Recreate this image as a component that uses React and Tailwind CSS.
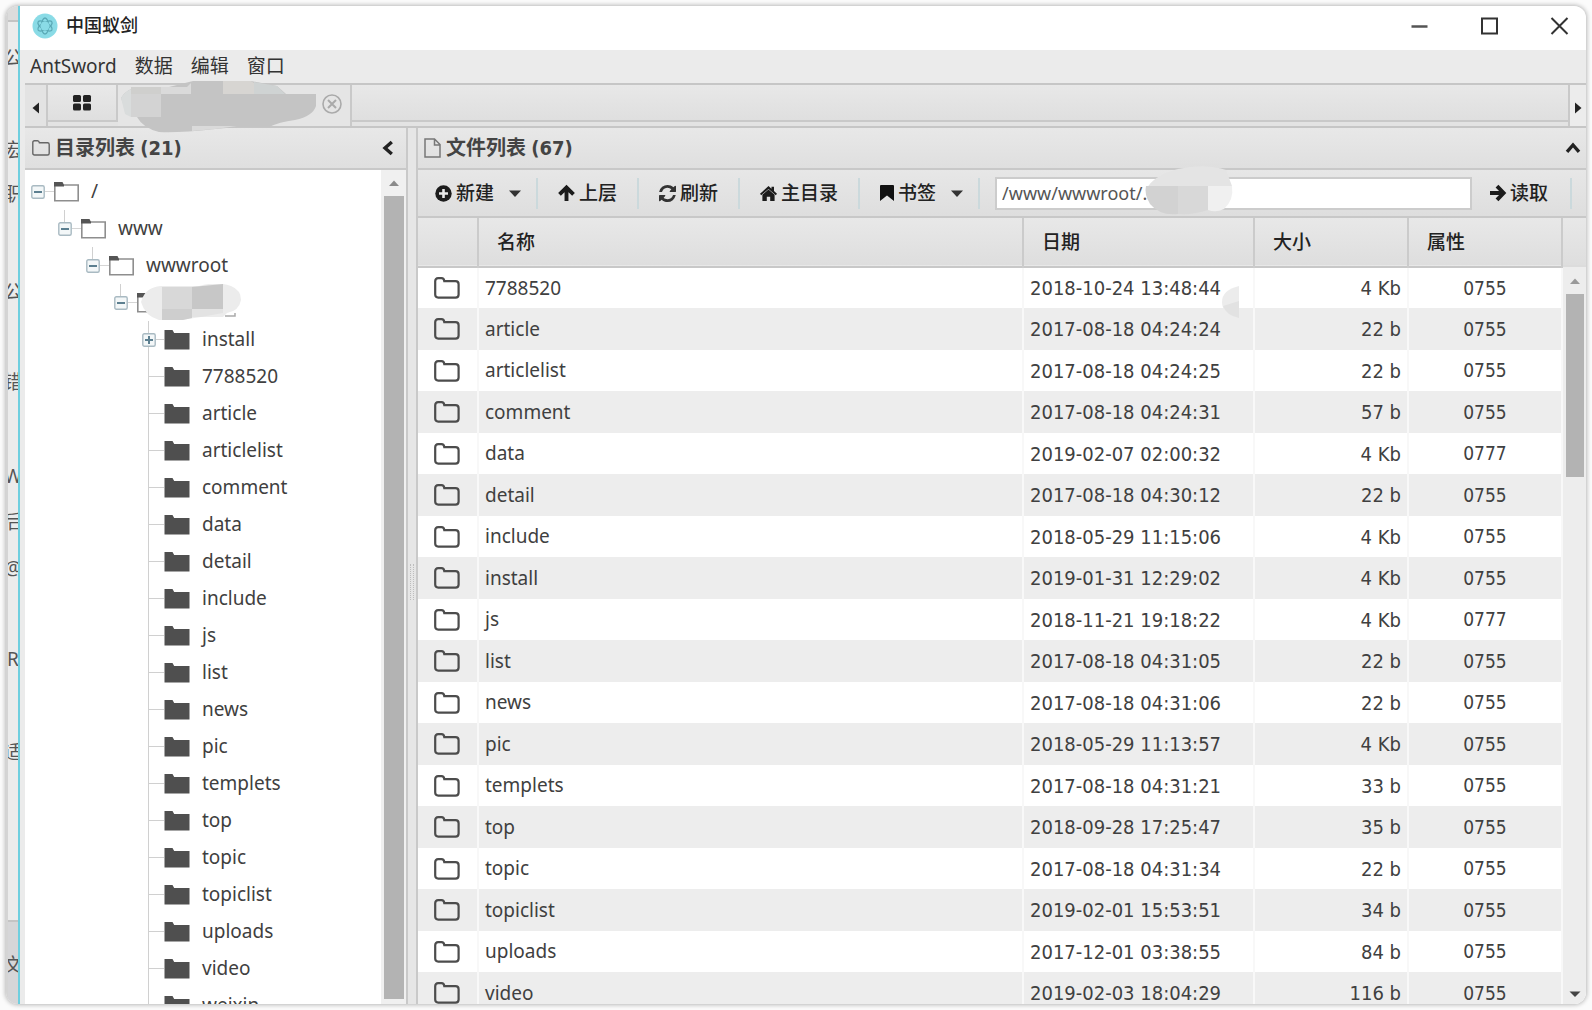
import React from "react";

const treeItems = ["install", "7788520", "article", "articlelist", "comment", "data", "detail", "include", "js", "list", "news", "pic", "templets", "top", "topic", "topiclist", "uploads", "video", "weixin"];

const files = [
  ["7788520", "2018-10-24 13:48:44", "4 Kb", "0755"],
  ["article", "2017-08-18 04:24:24", "22 b", "0755"],
  ["articlelist", "2017-08-18 04:24:25", "22 b", "0755"],
  ["comment", "2017-08-18 04:24:31", "57 b", "0755"],
  ["data", "2019-02-07 02:00:32", "4 Kb", "0777"],
  ["detail", "2017-08-18 04:30:12", "22 b", "0755"],
  ["include", "2018-05-29 11:15:06", "4 Kb", "0755"],
  ["install", "2019-01-31 12:29:02", "4 Kb", "0755"],
  ["js", "2018-11-21 19:18:22", "4 Kb", "0777"],
  ["list", "2017-08-18 04:31:05", "22 b", "0755"],
  ["news", "2017-08-18 04:31:06", "22 b", "0755"],
  ["pic", "2018-05-29 11:13:57", "4 Kb", "0755"],
  ["templets", "2017-08-18 04:31:21", "33 b", "0755"],
  ["top", "2018-09-28 17:25:47", "35 b", "0755"],
  ["topic", "2017-08-18 04:31:34", "22 b", "0755"],
  ["topiclist", "2019-02-01 15:53:51", "34 b", "0755"],
  ["uploads", "2017-12-01 03:38:55", "84 b", "0755"],
  ["video", "2019-02-03 18:04:29", "116 b", "0755"],
];

const icon = "shrink-0 overflow-visible";

const FolderOutline = () => (
  <svg className={icon} width="26" height="22" viewBox="0 0 26 22" fill="none" stroke="#4c4c4c" strokeWidth="2.200">
    <path d="M1.2 4.2Q1.2 1.2 4.2 1.2H7.5Q10 1.2 10.3 4.2H21.5Q24.6 4.2 24.6 7.2V17.5Q24.6 20.6 21.5 20.6H4.2Q1.2 20.6 1.2 17.5Z" />
  </svg>
);
const FolderSolid = () => (
  <svg className={icon} width="26" height="20" viewBox="0 0 26 20" fill="#4f4f4f">
    <path d="M0.500 0H8.500L10.2 3H25.5V19.5H0.5Z" />
  </svg>
);
const FolderOpen = () => (
  <svg className={icon} width="26" height="20" viewBox="0 0 26 20">
    <path d="M0.8 3H24.2V18.8H0.8Z" fill="#fff" stroke="#8e8e8e" strokeWidth="1.6" />
    <path d="M0 4.5V0H8.5L10 3V4.5Z" fill="#555" />
  </svg>
);
const Toggle = ({ plus, label }) => (
  <button type="button" aria-label={label} className="relative z-10 flex size-[14px] shrink-0 items-center justify-center">
    <svg className={icon} width="14" height="14" viewBox="0 0 14 14">
      <rect x="0.8" y="0.8" width="12.4" height="12.4" rx="1.5" fill="#f3f7f8" stroke="#a9bac2" strokeWidth="1.4" />
      <path d="M3 7H11" stroke="#5c7f90" strokeWidth="2" />
      {plus && <path d="M7 3V11" stroke="#5c7f90" strokeWidth="2" />}
    </svg>
  </button>
);
const Caret = () => (
  <svg className={icon} width="12" height="7" viewBox="0 0 12 7" fill="#333"><path d="M0 0.5H12L6 7Z" /></svg>
);
const PlusCircle = () => (
  <svg className={icon} width="17" height="17" viewBox="0 0 17 17">
    <circle cx="8.5" cy="8.5" r="8.2" fill="#1c1c1c" />
    <path d="M8.5 4V13M4 8.5H13" stroke="#e8e8e8" strokeWidth="2.6" />
  </svg>
);
const ArrowUp = () => (
  <svg className={icon} width="17" height="16" viewBox="0 0 17 16" fill="none" stroke="#1c1c1c" strokeWidth="3.900">
    <path d="M1.5 9.300L8.5 2.500L15.5 9.300M8.5 3V16" />
  </svg>
);
const ArrowRight = () => (
  <svg className={icon} width="16" height="16" viewBox="0 0 16 16" fill="none" stroke="#1c1c1c" strokeWidth="3.900">
    <path d="M7 1.2L13.600 8L7 14.8M0 8H13" />
  </svg>
);
const Refresh = () => (
  <svg className={icon} width="17" height="17" viewBox="0 0 1536 1536" fill="#333">
    <path d="M1511 928q0 5-1 7-64 268-268 434.500T764 1536q-146 0-282.500-55T238 1324l-129 129q-19 19-45 19t-45-19-19-45V960q0-26 19-45t45-19h448q26 0 45 19t19 45-19 45l-137 137q71 66 161 102t187 36q134 0 250-65t186-179q11-17 53-117 8-23 30-23h192q13 0 22.500 9.500t9.500 22.500zM1536 128v448q0 26-19 45t-45 19h-448q-26 0-45-19t-19-45 19-45l138-138Q969 256 768 256q-134 0-250 65T332 500q-11 17-53 117-8 23-30 23H50q-13 0-22.500-9.500T18 608v-7q65-268 270-434.500T768 0q146 0 284 55.500T1297 212l130-129q19-19 45-19t45 19 19 45z" />
  </svg>
);
const HomeIcon = () => (
  <svg className={icon} width="17" height="15" viewBox="0 0 17 15" fill="#1c1c1c">
    <path d="M8.500 0L11.500 2.700V0.800H14V5L17 7.800L15.800 9.200L8.500 2.900L1.200 9.200L0 7.800Z" />
    <path d="M8.500 3.400L14.600 8.700V15H10.200V10.800H6.800V15H2.400V8.700Z" />
  </svg>
);
const Bookmark = () => (
  <svg className={icon} width="14" height="16" viewBox="0 0 14 16" fill="#111"><path d="M0 1Q0 0 1 0H13Q14 0 14 1V16L7 10.500L0 16Z" /></svg>
);
const Logo = () => (
  <svg className={icon} width="26" height="26" viewBox="0 0 26 26">
    <circle cx="13" cy="13" r="12.500" fill="#8adbe6" />
    <g fill="none" stroke="#5aa9b6" strokeWidth="1.300">
      <ellipse cx="13" cy="13" rx="3.500" ry="8" />
      <ellipse cx="13" cy="13" rx="3.500" ry="8" transform="rotate(60 13 13)" />
      <ellipse cx="13" cy="13" rx="3.500" ry="8" transform="rotate(120 13 13)" />
    </g>
    <circle cx="13" cy="13" r="4.500" fill="#8adbe6" />
  </svg>
);
const Triangle = ({ d, fill }) => (
  <svg className={icon} width="12" height="12" viewBox="0 0 12 12" fill={fill}><path d={d} /></svg>
);

const Tool = ({ children, label, caret, className = "" }) => (
  <button type="button" className={"flex h-full items-center gap-1 whitespace-nowrap text-[19px] font-medium text-[#222] " + className}>
    {children}
    <span>{label}</span>
    {caret && <span className="ml-[11px]"><Caret /></span>}
  </button>
);
const Sep = ({ className = "" }) => <span className={"h-[31px] w-[2px] shrink-0 bg-[#cbd9dc] " + className} />;

const indents = ["pl-[6px]", "pl-[33px]", "pl-[61px]", "pl-[89px]"];

function TreePanel() {
  return (
    <section className="flex w-[383px] shrink-0 flex-col border-r-2 border-[#c9c9c9]">
      <header className="flex h-[42px] shrink-0 items-center border-b-2 border-[#c8c8c8] bg-linear-to-b from-[#e8e8e8] to-[#dfdfdf] pl-[7px] pr-[13px]">
        <svg className={icon} width="18" height="16" viewBox="0 0 18 16" fill="none" stroke="#666" strokeWidth="1.400">
          <path d="M0.800 2.500Q0.800 0.800 2.500 0.800H5.500Q7 0.800 7.400 2.800H15.500Q17.200 2.800 17.200 4.500V13.200Q17.200 15 15.500 15H2.500Q0.800 15 0.800 13.200Z" />
        </svg>
        <h2 className="ml-[5px] text-[20px] font-bold text-[#444]">目录列表 <span className="font-['DejaVu_Sans_Condensed','DejaVu_Sans',sans-serif]">(21)</span></h2>
        <button type="button" aria-label="收起目录" className="ml-auto">
          <svg className={icon} width="10" height="14" viewBox="0 0 10 14" fill="none" stroke="#222" strokeWidth="3.400"><path d="M8.800 1L2 7L8.800 13" /></svg>
        </button>
      </header>
      <div className="flex min-h-0 flex-1 bg-white">
        <ul className="min-w-0 flex-1 overflow-hidden pt-[3px] text-[19px] text-[#404040]">
          {["/", "www", "wwwroot", ""].map((name, i) => (
            <li key={i} className={"relative flex h-[37px] items-center " + indents[i]}>
              <span className="relative flex items-center">
                {i > 0 && <span className="absolute bottom-1/2 left-[6px] h-[19px] w-px bg-[#d0d0d0]" />}
                <Toggle label={"收起 " + name} />
                <span className="h-px w-[9px] bg-[#d5d5d5]" />
                <FolderOpen />
              </span>
              <span className="ml-[11px]">{name}</span>
              {i === 3 && (
                <svg className="absolute left-[114px] top-0" width="104" height="38" viewBox="0 0 104 38">
                  <path d="M2 18Q6 3 22 2L60 2Q78 -3 92 2Q102 6 102 16Q100 27 88 29L84 33H62L42 36H20Q6 32 2 18Z" fill="#ececec" />
                  <path d="M23 3H53V25H23Z" fill="#d8d8d8" />
                  <path d="M53 3L84 0V25H53Z" fill="#c7c7c7" />
                  <path d="M23 25H53V34L44 36H23Z" fill="#cecece" />
                  <path d="M53 25H84V29L62 33H53Z" fill="#e3e3e3" />
                  <path d="M86 32H96V29" fill="none" stroke="#aaa" strokeWidth="1.500" />
                </svg>
              )}
            </li>
          ))}
          {treeItems.map((name, i) => (
            <li key={name} className="flex h-[37px] items-center pl-[117px]">
              <span className="relative flex h-[37px] w-[14px] items-center">
                <span className="absolute inset-y-0 left-[6px] w-px bg-[#d0d0d0]" />
                {i === 0 ? <Toggle plus label="展开 install" /> : <span className="ml-[6px] h-px w-[8px] bg-[#d0d0d0]" />}
              </span>
              <span className="h-px w-[8px] bg-[#d0d0d0]" />
              <FolderSolid />
              <span className="ml-[12px]">{name}</span>
            </li>
          ))}
        </ul>
        <div className="flex w-[25px] shrink-0 flex-col items-center bg-[#f0f0f0] pb-[5px]">
          <span className="flex h-[26px] items-center"><Triangle d="M1 9L6 3.500L11 9Z" fill="#8a8a8a" /></span>
          <span className="w-[20px] flex-1 bg-[#b3b3b3]" />
        </div>
      </div>
    </section>
  );
}

const headCell = "border-r-2 border-[#cbcbcb] pl-[18px] text-left font-medium";
const cell = "border-r-2 border-[#f8f8f8] px-[6px] py-0";

function FilePanel() {
  return (
    <section className="flex min-w-0 flex-1 flex-col border-l-2 border-[#c9c9c9]">
      <header className="flex h-[42px] shrink-0 items-center border-b-2 border-[#c8c8c8] bg-linear-to-b from-[#e8e8e8] to-[#dfdfdf] pl-[6px] pr-[6px]">
        <svg className={icon} width="17" height="20" viewBox="0 0 17 20" fill="none" stroke="#777" strokeWidth="1.500">
          <path d="M1 1H10.500L16 6.500V19H1ZM10.500 1V7H16" />
        </svg>
        <h2 className="ml-[5px] text-[20px] font-bold text-[#444]">文件列表 <span className="font-['DejaVu_Sans_Condensed','DejaVu_Sans',sans-serif]">(67)</span></h2>
        <button type="button" aria-label="收起文件" className="ml-auto">
          <svg className={icon} width="14" height="10" viewBox="0 0 14 10" fill="none" stroke="#222" strokeWidth="3.400"><path d="M1 8.800L7 2L13 8.800" /></svg>
        </button>
      </header>
      <div className="relative flex h-[48px] shrink-0 items-center border-b-2 border-[#c8c8c8] bg-linear-to-b from-[#e7e7e7] to-[#dedede] pl-[17px] pr-[14px]">
        <Tool label="新建" caret><PlusCircle /></Tool>
        <Sep className="ml-[15px] mr-[20px]" />
        <Tool label="上层"><ArrowUp /></Tool>
        <Sep className="mx-[20px]" />
        <Tool label="刷新"><Refresh /></Tool>
        <Sep className="mx-[20px]" />
        <Tool label="主目录"><HomeIcon /></Tool>
        <Sep className="mx-[20px]" />
        <Tool label="书签" caret><Bookmark /></Tool>
        <Sep className="mx-[15px]" />
        <input aria-label="路径" defaultValue="/www/wwwroot/." className="h-[33px] min-w-0 flex-1 border-2 border-[#cccccc] bg-white px-[5px] text-[18px] text-[#555] outline-none" />
        <Tool label="读取" className="ml-[18px]"><ArrowRight /></Tool>
        <Sep className="ml-[22px]" />
        <svg className="absolute left-[726px] top-[-4px]" width="92" height="54" viewBox="0 0 92 54">
          <path d="M2 24Q8 10 34 3Q60 -3 82 4L88 20H2Z" fill="#e4e4e4" />
          <path d="M2 20H34V48Q16 50 6 38Q0 28 2 20Z" fill="#d2d2d2" />
          <path d="M34 20H64V44Q50 49 34 48Z" fill="#d8d8d8" />
          <path d="M64 20H88Q90 34 80 43Q72 47 64 44Z" fill="#f0f0f0" />
        </svg>
      </div>
      <div className="relative flex min-h-0 flex-1 overflow-hidden bg-white">
        <div className="min-w-0 flex-1">
          <table className="w-full table-fixed border-collapse text-[19px] text-[#404040]">
            <colgroup>
              <col className="w-[60px]" /><col /><col className="w-[231px]" /><col className="w-[154px]" /><col className="w-[154px]" />
            </colgroup>
            <thead>
              <tr className="h-[49px] border-b-2 border-[#c8c8c8] bg-linear-to-b from-[#e8e8e8] to-[#dedede] text-[#222]">
                <th className={headCell} aria-label="图标" />
                <th className={headCell}>名称</th>
                <th className={headCell}>日期</th>
                <th className={headCell}>大小</th>
                <th className={headCell}>属性</th>
              </tr>
            </thead>
            <tbody>
              {files.map(([name, date, size, attr]) => (
                <tr key={name} className="h-[41px] bg-white even:h-[42px] even:bg-[#ededed]">
                  <td className={cell + " pl-[16px]"}><FolderOutline /></td>
                  <td className={cell}>{name}</td>
                  <td className={cell + " whitespace-nowrap text-[20px] font-['DejaVu_Sans_Condensed','DejaVu_Sans',sans-serif]"}>{date}</td>
                  <td className={cell + " text-right text-[20px] font-['DejaVu_Sans_Condensed','DejaVu_Sans',sans-serif]"}>{size}</td>
                  <td className={cell + " text-center font-['DejaVu_Sans_Condensed','DejaVu_Sans',sans-serif]"}>{attr}</td>
                </tr>
              ))}
            </tbody>
          </table>
        </div>
        <div className="flex w-[23px] shrink-0 flex-col">
          <span className="h-[49px] shrink-0 border-b-2 border-[#dcdcdc] bg-linear-to-b from-[#e8e8e8] to-[#dedede]" />
          <div className="flex flex-1 flex-col items-center bg-[#ededed]">
            <span className="flex h-[27px] items-center"><Triangle d="M1 9L6 3.500L11 9Z" fill="#999" /></span>
            <span className="h-[183px] w-[18px] bg-[#b3b3b3]" />
            <span className="mt-auto flex h-[20px] items-center"><Triangle d="M0.500 3.500H11.500L6 9Z" fill="#444" /></span>
          </div>
        </div>
        <svg className="absolute left-[804px] top-[68px]" width="18" height="32" viewBox="0 0 18 32">
          <path d="M17 0V32Q0 28 0 16Q0 4 17 0Z" fill="#ececec" /><path d="M17 15V32Q4 29 1 20Z" fill="#e2e2e2" />
        </svg>
      </div>
    </section>
  );
}

const fragments = [
  ["公", "h-[92px]"], ["宏", "h-[44px]"], ["职", "h-[98px]"], ["公", "h-[90px]"],
  ["错", "h-[94px]"], ["W", "h-[46px]"], ["后", "h-[46px]"], ["@", "h-[91px]"], ["R", "h-[93px]"], ["适", "h-[24px]"],
];

export default function App() {
  return (
    <div className="h-screen w-full bg-[#fbfbfb] px-[6px] py-[6px] font-['Noto_Sans','Noto_Sans_CJK_SC',sans-serif]">
      <div className="flex h-full overflow-hidden rounded-[12px] bg-[#ebebeb] shadow-[0_0_4px_1px_#b8b8b8]">
        <aside aria-hidden="true" className="flex w-[14px] shrink-0 flex-col overflow-hidden border-l-2 border-r-2 border-l-[#d4d4d4] border-r-[#6fcfdf] bg-[#ececec] text-[19px] leading-[24px] text-[#555]">
          <span className="h-[16px] shrink-0 border-b-2 border-[#c4c4c4] bg-[#dcdcdc]" />
          <span className="h-[24px] shrink-0" />
          {fragments.map(([t, h], i) => (
            <span key={i} className={"flex shrink-0 justify-center overflow-hidden " + h}>{t}</span>
          ))}
          <span className="mt-auto flex h-[84px] shrink-0 justify-center overflow-hidden border-t-2 border-[#c4c4c4] bg-[#d6d6d8] pt-[31px]">文</span>
        </aside>
        <main className="flex min-w-0 flex-1 flex-col">
          <div className="flex h-[44px] shrink-0 items-center bg-white pb-[5px] pl-[12px] pr-[18px]">
            <Logo />
            <h1 className="ml-[8px] text-[18px] font-medium text-[#222]">中国蚁剑</h1>
            <div className="ml-auto flex items-center gap-[53px]">
              <button type="button" aria-label="最小化"><svg className={icon} width="17" height="18" viewBox="0 0 17 18"><path d="M0.500 9.500H16.500" stroke="#555" strokeWidth="2.400" /></svg></button>
              <button type="button" aria-label="最大化"><svg className={icon} width="17" height="18" viewBox="0 0 17 18"><rect x="1" y="1.500" width="15" height="15" fill="none" stroke="#333" strokeWidth="2" /></svg></button>
              <button type="button" aria-label="关闭"><svg className={icon} width="17" height="18" viewBox="0 0 17 18"><path d="M0.500 1L16.500 17M16.500 1L0.500 17" stroke="#333" strokeWidth="2" /></svg></button>
            </div>
          </div>
          <nav className="flex h-[33px] shrink-0 items-center gap-[18px] bg-[#ebebeb] pl-[10px] text-[19px] text-[#333]">
            <button type="button">AntSword</button>
            <button type="button">数据</button>
            <button type="button">编辑</button>
            <button type="button">窗口</button>
          </nav>
          <div className="flex min-h-0 flex-1 flex-col pl-[5px]">
            <div className="relative flex h-[45px] shrink-0 items-start border-b-2 border-t-2 border-[#c6c6c6] bg-[#e3e3e3]">
              <button type="button" aria-label="向左滚动" className="flex h-full w-[23px] shrink-0 items-center justify-center border-r-2 border-[#c9c9c9] pt-1"><Triangle d="M9 0.500V11.500L2.500 6Z" fill="#222" /></button>
              <button type="button" aria-label="首页" className="flex h-[37px] w-[70px] items-center justify-center border-b-2 border-r-2 border-[#c9c9c9] bg-linear-to-b from-[#e9e9e9] to-[#dfdfdf]">
                <svg className={icon} width="18" height="16" viewBox="0 0 18 16" fill="#222">
                  <rect width="8" height="7" rx="1.500" /><rect x="10" width="8" height="7" rx="1.500" /><rect y="8.500" width="8" height="7" rx="1.500" /><rect x="10" y="8.500" width="8" height="7" rx="1.500" />
                </svg>
              </button>
              <div className="flex h-full w-[234px] shrink-0 items-center justify-end border-r-2 border-[#c9c9c9] bg-[#e5e5e5] pb-[4px] pr-[8px]">
                <button type="button" aria-label="关闭标签">
                  <svg className={icon} width="20" height="20" viewBox="0 0 20 20" fill="none" stroke="#aaa" strokeWidth="1.600"><circle cx="10" cy="10" r="9" /><path d="M6 6L14 14M14 6L6 14" strokeWidth="2" /></svg>
                </button>
              </div>
              <div className="h-[37px] flex-1 border-b-2 border-[#c9c9c9] bg-linear-to-b from-[#e8e8e8] to-[#dfdfdf]" />
              <button type="button" aria-label="向右滚动" className="flex h-full w-[18px] shrink-0 items-center justify-center border-l-2 border-[#c9c9c9] bg-[#ececec] pt-1"><Triangle d="M3 0.500V11.500L9.500 6Z" fill="#222" /></button>
              <svg className="absolute left-[94px] top-[-5px] z-10" width="200" height="54" viewBox="0 0 200 54">
                <path d="M2 18Q6 10 18 7H50L74 1H132L158 6L167 14H197V26Q194 36 176 40Q160 42 150 47H118L96 49Q60 53 40 52Q24 48 18 37L8 34Z" fill="#c4c4c4" />
                <path d="M2 18Q6 10 18 7H42V14H12V37L6 34Z" fill="#d9dcdc" />
                <path d="M12 7H42V14H12Z" fill="#cfcfcd" /><path d="M12 14H42V37H12Z" fill="#d3d3d3" />
                <path d="M42 7H68L72 3V14H42Z" fill="#dadada" />
                <path d="M104 1H132L135 3V14H104Z" fill="#d7d5d2" /><path d="M135 2L158 6L166 14H135Z" fill="#cfd3d3" />
                <path d="M73 46H118L96 49L73 51Z" fill="#dadada" />
              </svg>
            </div>
            <div className="flex min-h-0 flex-1 bg-[#e6e6e6]">
              <TreePanel />
              <div className="flex w-[8px] shrink-0 items-center justify-center pt-[32px]">
                <span className="h-[36px] w-[4px] border-x border-dotted border-[#bdbdbd]" />
              </div>
              <FilePanel />
            </div>
          </div>
        </main>
      </div>
    </div>
  );
}
